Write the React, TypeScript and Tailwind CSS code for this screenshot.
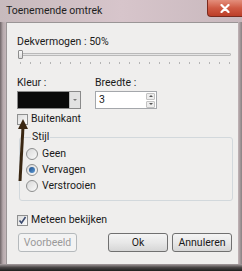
import React from "react";

const font = { fontFamily: 'Roboto, "Noto Sans", sans-serif' };

function Checkbox({ checked }: { checked?: boolean }) {
  return (
    <span className="relative flex h-[11px] w-[11px] items-center justify-center border border-[#8e8f8f] bg-gradient-to-br from-[#dcdcdc] to-[#fbfbfb]">
      {checked && (
        <svg width="9" height="9" viewBox="0 0 9 9" className="absolute">
          <path d="M1.5 4.5 L3.5 7 L7.5 1" fill="none" stroke="#3b4a6e" strokeWidth="1.6" />
        </svg>
      )}
    </span>
  );
}

function Radio({ checked }: { checked?: boolean }) {
  return (
    <span className="flex h-[12px] w-[12px] items-center justify-center rounded-full border border-[#8e8f8f] bg-gradient-to-br from-[#d8d8d8] to-[#fafafa]">
      {checked && <span className="h-[6px] w-[6px] rounded-full bg-gradient-to-br from-[#1d4f8c] to-[#5f9bd4]" />}
    </span>
  );
}

function Button({ label, disabled, className }: { label: string; disabled?: boolean; className?: string }) {
  return (
    <div
      className={
        "flex h-[19px] items-center justify-center rounded-[3px] border text-[10.5px] " +
        (disabled
          ? "border-[#b5b9bc] bg-[#f3f3f3] text-[#9a9a9a] "
          : "border-[#707070] bg-gradient-to-b from-[#f4f4f4] via-[#e8e8e8] to-[#d6d6d6] text-[#1a1a1a] ") +
        (className ?? "")
      }
    >
      {label}
    </div>
  );
}

export default function App() {
  const ticks = Array.from({ length: 22 });
  return (
    <div className="relative flex h-[271px] w-[242px] flex-col overflow-hidden bg-[#c9bcbf]" style={font}>
      {/* title bar */}
      <div className="flex h-[22px] items-center bg-gradient-to-r from-[#c7babd] via-[#d7c5cb] to-[#c8b8bd] pl-[6px]">
        <span className="text-[10.5px] leading-none text-[#1e1e1e]">Toenemende omtrek</span>
        <div className="ml-auto flex h-[17px] w-[35px] items-center justify-center self-start rounded-bl-[4px] border border-t-0 border-r-0 border-[#7a2a1e] bg-gradient-to-b from-[#e38e7c] via-[#cf5a44] to-[#bc3e28]">
          <svg width="10" height="9" viewBox="0 0 10 9">
            <path d="M1.5 1 L8.5 8 M8.5 1 L1.5 8" stroke="#ffffff" strokeWidth="2.2" strokeLinecap="round" />
          </svg>
        </div>
      </div>
      <div className="flex flex-1">
        <div className="w-[6px] bg-gradient-to-r from-[#6f6668] via-[#b6a9ac] to-[#c3b6b9]" />
        {/* panel */}
        <div className="flex flex-1 flex-col border-l border-t border-[#9a9596] bg-[#efeeed] pl-[10px] pr-[5px] text-[10.5px] leading-[16px] text-[#1a1a1a]">
          <div className="mt-[11px]">Dekvermogen : 50%</div>
          <div className="relative h-[14px]">
            <div className="absolute left-[2px] right-[2px] top-[3px] h-[3px] rounded-[1px] border border-[#b9b9b9] bg-[#e4e4e4]" />
            <div className="absolute left-[1px] top-0 h-[9px] w-[5px] rounded-[1px] border border-[#8d8d8d] bg-gradient-to-b from-[#fafafa] to-[#dcdcdc]" />
            <div className="absolute bottom-0 left-[3px] right-[3px] flex justify-between">
              {ticks.map((_, i) => (
                <span key={i} className="h-[2px] w-px bg-[#b4b4b4]" />
              ))}
            </div>
          </div>
          <div className="mt-[11px] flex">
            <div className="w-[78px]">
              <div>Kleur :</div>
              <div className="flex h-[18px] w-[64px] border border-[#8a8a8a]">
                <div className="flex-1 bg-[#0a0a0a]" />
                <div className="flex w-[11px] items-center justify-center border-l border-[#b8b8b8] bg-[#e2e2e2]">
                  <span className="h-0 w-0 border-l-[2px] border-r-[2px] border-t-[2px] border-l-transparent border-r-transparent border-t-[#7a7a7a]" />
                </div>
              </div>
            </div>
            <div>
              <div>Breedte :</div>
              <div className="flex h-[18px] w-[62px] items-center border border-[#a4a7ab] bg-white pl-[3px] pr-[1px]">
                <span className="flex-1">3</span>
                <div className="flex h-[15px] w-[9px] flex-col gap-px">
                  <div className="flex flex-1 items-center justify-center rounded-[1px] border border-[#c2c2c2] bg-[#ededed]">
                    <span className="h-0 w-0 border-b-[2px] border-l-[2px] border-r-[2px] border-b-[#555] border-l-transparent border-r-transparent" />
                  </div>
                  <div className="flex flex-1 items-center justify-center rounded-[1px] border border-[#c2c2c2] bg-[#ededed]">
                    <span className="h-0 w-0 border-l-[2px] border-r-[2px] border-t-[2px] border-l-transparent border-r-transparent border-t-[#555]" />
                  </div>
                </div>
              </div>
            </div>
          </div>
          <div className="mt-[2px] flex h-[16px] items-center gap-[3px]">
            <Checkbox />
            <span>Buitenkant</span>
          </div>
          <fieldset className="ml-[2px] mt-[2px] rounded-[3px] border border-[#d2d8dc] pb-[6px] pl-[6px]">
            <legend className="ml-[5px] px-[1px]">Stijl</legend>
            <div className="mt-[1px] flex h-[16px] items-center gap-[4px]">
              <Radio />
              <span>Geen</span>
            </div>
            <div className="flex h-[16px] items-center gap-[4px]">
              <Radio checked />
              <span>Vervagen</span>
            </div>
            <div className="flex h-[16px] items-center gap-[4px]">
              <Radio />
              <span>Verstrooien</span>
            </div>
          </fieldset>
          <div className="mt-[11px] flex h-[16px] items-center gap-[3px]">
            <Checkbox checked />
            <span>Meteen bekijken</span>
          </div>
          <div className="mt-[5px] flex">
            <Button label="Voorbeeld" disabled className="ml-[1px] w-[59px]" />
            <Button label="Ok" className="ml-[31px] w-[60px]" />
            <Button label="Annuleren" className="ml-[4px] w-[60px]" />
          </div>
        </div>
        <div className="w-[4px] bg-gradient-to-r from-[#c3b6b9] to-[#8a8082]" />
      </div>
      <div className="h-[7px] bg-gradient-to-b from-[#a9a0a2] via-[#4a4646] to-[#1e1e1e]" />
      {/* annotation arrow */}
      <svg className="pointer-events-none absolute left-0 top-0" width="242" height="271">
        <path d="M23 127 L20 181" stroke="#3a2712" strokeWidth="3" />
        <path d="M23 119 L28 129 L18 129 Z" fill="#3a2712" />
      </svg>
    </div>
  );
}
